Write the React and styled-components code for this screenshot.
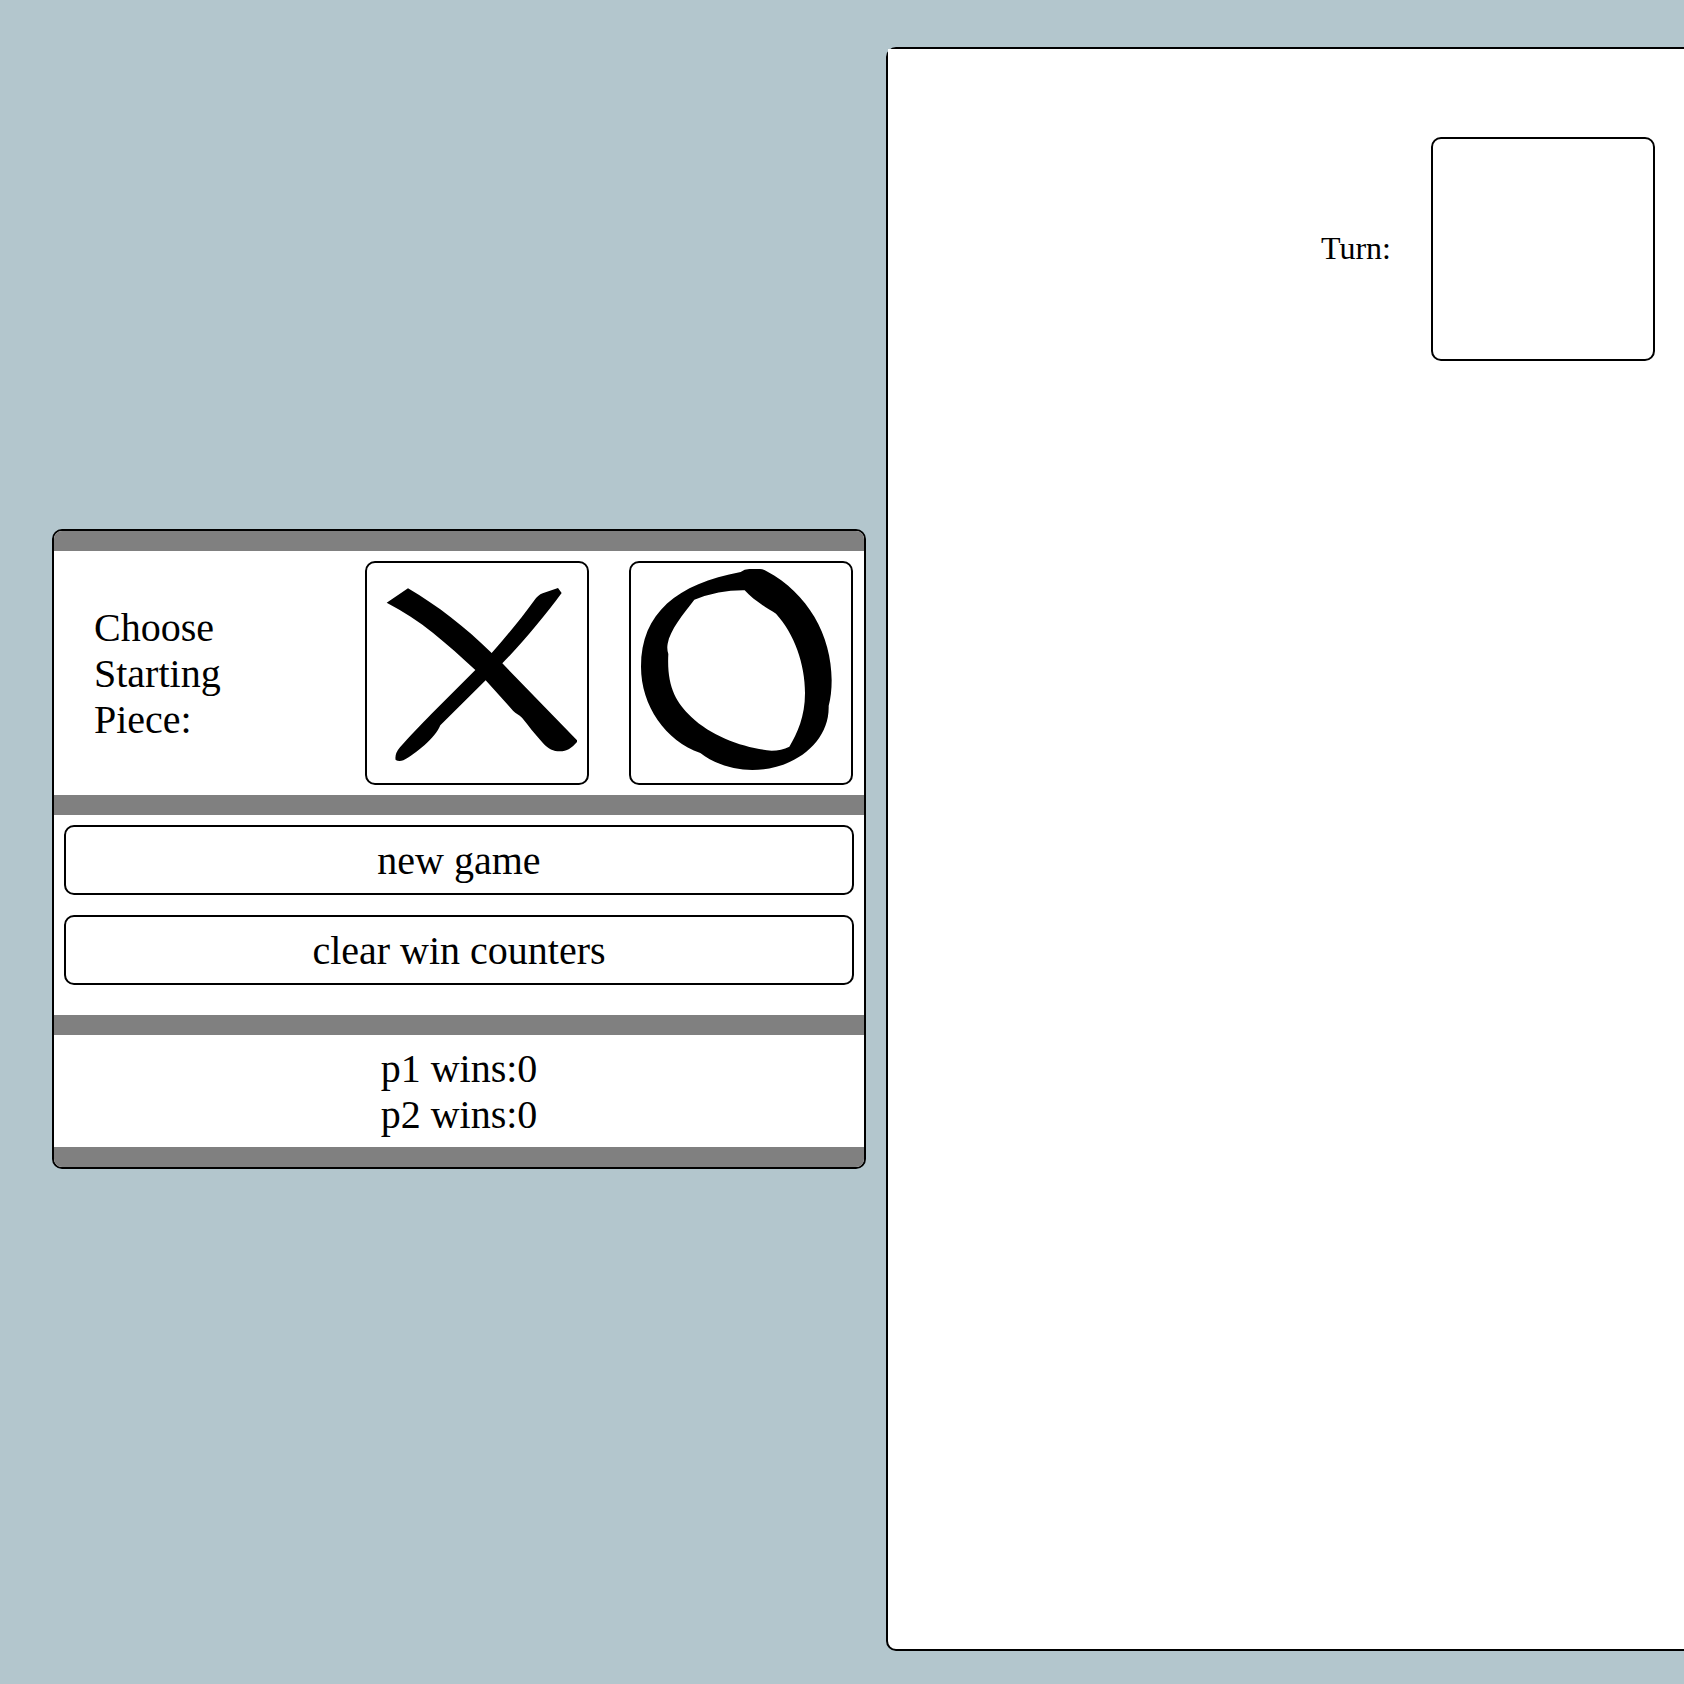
import React from "react";
import styled, { createGlobalStyle } from "styled-components";

const GlobalStyle = createGlobalStyle`
  *, *::before, *::after { box-sizing: border-box; }
  body {
    margin: 0;
    background: #b3c6cd;
    color: #000;
    font-family: "Liberation Serif", "Times New Roman", serif;
    font-size: 40px;
    line-height: 46px;
    overflow: hidden;
  }
`;

const Page = styled.main`
  display: flex;
  align-items: center;
  gap: 20px;
  width: 100%;
  height: 1684px;
  padding: 47px 0 33px 52px;
  overflow: hidden;
`;

const Menu = styled.section`
  flex: none;
  width: 814px;
  border: 2px solid #000;
  border-radius: 10px;
  background: #fff;
  overflow: hidden;
`;

const Divider = styled.div`
  height: 20px;
  background: #808080;
`;

const PieceRow = styled.div`
  display: flex;
  align-items: center;
  gap: 40px;
  padding: 10px 11px 10px 40px;
`;

const PieceLabel = styled.div`
  width: 160px;
  margin-right: auto;
  padding-top: 2px;
`;

const Tile = styled.div`
  flex: none;
  width: 224px;
  height: 224px;
  border: 2px solid #000;
  border-radius: 10px;
`;

const Mark = styled.svg`
  display: block;
  width: 220px;
  height: 220px;
`;

const Actions = styled.div`
  display: flex;
  flex-direction: column;
  gap: 20px;
  padding: 10px 10px 30px;
`;

const Button = styled.button`
  height: 70px;
  padding: 11px 10px 9px;
  border: 2px solid #000;
  border-radius: 10px;
  background: #fff;
  color: inherit;
  font: inherit;
  text-align: center;
`;

const Scores = styled.div`
  padding: 11px 10px 9px;
  text-align: center;
`;

const Board = styled.section`
  flex: none;
  width: 1604px;
  height: 1604px;
  border: 2px solid #000;
  border-radius: 10px;
  background: #fff;
`;

const BoardContent = styled.div`
  height: 800px;
  padding: 88px 0 0 433px;
  background: #fff;
`;

const TurnRow = styled.div`
  display: flex;
  align-items: center;
  gap: 40px;
  font-size: 32px;
  line-height: 36px;
`;

const TurnLabel = styled.span`
  width: 70px;
  padding-bottom: 2px;
  text-align: right;
  white-space: nowrap;
`;

const Cross = () => (
  <Mark viewBox="21 39 660 660" role="img" aria-label="X">
    <path d="M80 158L144 115C234 168 315 231 395 309C438 260 484 205 522 152Q534 135 548 130L594 114L605 129C552 201 487 278 427 340L651 571V576C636 594 620 604 600 604C580 604 565 597 548 578C525 553 504 525 486 503C477 493 468 491 459 482L377 391L241 526C227 562 167 612 130 631Q117 636 107 630Q103 612 120 592C148 560 184 523 214 492L346 360C263 283 180 208 80 158Z" />
  </Mark>
);

const Nought = () => (
  <Mark viewBox="33 39 660 660" role="img" aria-label="O">
    <path
      fillRule="evenodd"
      d="M362 66Q373 57 388 57H420Q431 57 440 64C563 129 635 257 635 391Q635 434 626 468C629 578 521 660 397 660C344 660 284 643 241 609C137 572 63 468 63 350C63 189 172 101 362 66ZM223 149C190 192 150 240 143 281Q140 297 145 312C140 408 167 457 214 501C276 560 374 595 455 602Q484 602 508 590C532 550 555 500 555 430C555 341 523 252 468 191C438 173 396 147 374 121Q298 120 223 149Z"
    />
  </Mark>
);

export default function App() {
  return (
    <>
      <GlobalStyle />
      <Page>
        <Menu>
          <Divider />
          <PieceRow>
            <PieceLabel>Choose Starting Piece:</PieceLabel>
            <Tile><Cross /></Tile>
            <Tile><Nought /></Tile>
          </PieceRow>
          <Divider />
          <Actions>
            <Button>new game</Button>
            <Button>clear win counters</Button>
          </Actions>
          <Divider />
          <Scores>
            <div>p1 wins:0</div>
            <div>p2 wins:0</div>
          </Scores>
          <Divider />
        </Menu>
        <Board>
          <BoardContent>
            <TurnRow>
              <TurnLabel>Turn:</TurnLabel>
              <Tile />
            </TurnRow>
          </BoardContent>
        </Board>
      </Page>
    </>
  );
}
